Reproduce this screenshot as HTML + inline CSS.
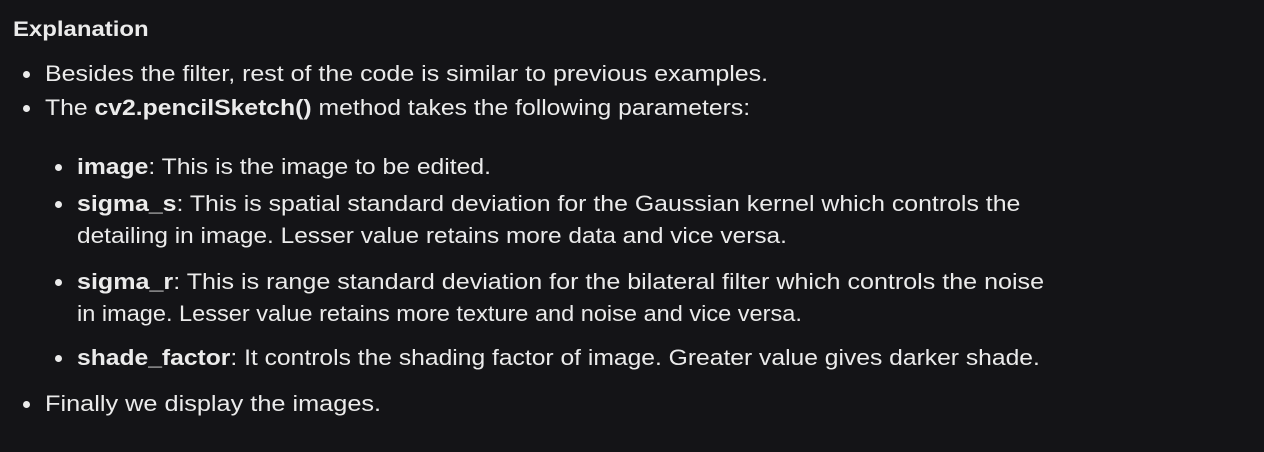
<!DOCTYPE html>
<html><head><style>
html,body{margin:0;padding:0;background:#141417;width:1264px;height:452px;overflow:hidden}
body{font-family:"Liberation Sans",sans-serif;color:#ebebeb;font-size:22px;position:relative}
.l{position:absolute;white-space:nowrap;line-height:32px;transform-origin:0 50%}
.d{position:absolute;width:7px;height:7px;border-radius:50%;background:#ebebeb}
b{font-weight:bold}
</style></head><body>
<div class="l" style="left:13px;top:14px;font-weight:bold;font-size:21px;transform:scaleX(1.14)">Explanation</div>
<div class="d" style="left:23px;top:71px"></div>
<div class="l" style="left:45px;top:58px;transform:scaleX(1.135)">Besides the filter, rest of the code is similar to previous examples.</div>
<div class="d" style="left:23px;top:105px"></div>
<div class="l" style="left:45px;top:92px;transform:scaleX(1.124)">The <b>cv2.pencilSketch()</b> method takes the following parameters:</div>
<div class="d" style="left:55px;top:164px"></div>
<div class="l" style="left:77px;top:151px;transform:scaleX(1.122)"><b>image</b>: This is the image to be edited.</div>
<div class="d" style="left:55px;top:201px"></div>
<div class="l" style="left:77px;top:188px;transform:scaleX(1.13)"><b>sigma_s</b>: This is spatial standard deviation for the Gaussian kernel which controls the</div>
<div class="l" style="left:77px;top:220px;transform:scaleX(1.11)">detailing in image. Lesser value retains more data and vice versa.</div>
<div class="d" style="left:55px;top:279px"></div>
<div class="l" style="left:77px;top:266px;transform:scaleX(1.14)"><b>sigma_r</b>: This is range standard deviation for the bilateral filter which controls the noise</div>
<div class="l" style="left:77px;top:298px;transform:scaleX(1.07)">in image. Lesser value retains more texture and noise and vice versa.</div>
<div class="d" style="left:55px;top:355px"></div>
<div class="l" style="left:77px;top:342px;transform:scaleX(1.12)"><b>shade_factor</b>: It controls the shading factor of image. Greater value gives darker shade.</div>
<div class="d" style="left:23px;top:401px"></div>
<div class="l" style="left:45px;top:388px;transform:scaleX(1.15)">Finally we display the images.</div>
</body></html>
